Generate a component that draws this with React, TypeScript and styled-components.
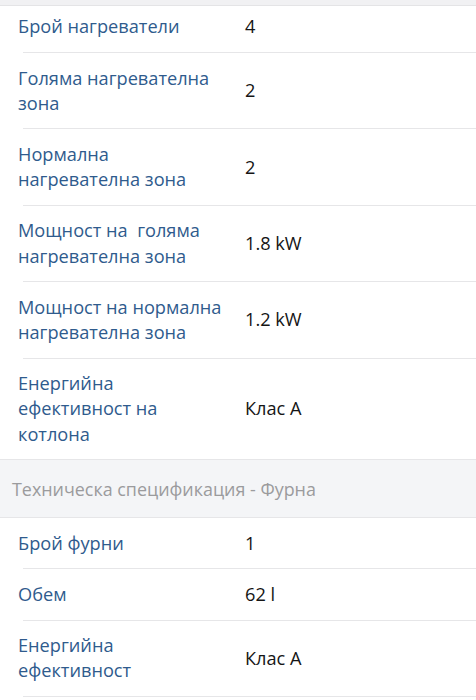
import React from "react";
import styled, { createGlobalStyle } from "styled-components";

const Global = createGlobalStyle`
  html, body { margin: 0; padding: 0; background: #fff; }
  body { font-family: "Open Sans", "Noto Sans", sans-serif; -webkit-font-smoothing: antialiased; }
`;

const Page = styled.div`
  width: 476px;
  background: #fff;
`;

const TopBand = styled.div`
  height: 5px;
  background: #f1f1f3;
  border-bottom: 1px solid #e4e4e6;
`;

const Row = styled.div<{ $first?: boolean }>`
  display: grid;
  grid-template-columns: 227px 1fr;
  align-items: center;
  padding: ${(p) => (p.$first ? "8.3px" : "12.5px")} 0 12.5px 18px;
  line-height: 25.2px;
`;

const Label = styled.div`
  font-size: 18.2px;
  color: #2f5b8d;
  padding-right: 18px;
  white-space: pre-wrap;
`;

const Value = styled.div`
  font-size: 18.2px;
  color: #151515;
`;

const Divider = styled.hr`
  margin: 0 0 0 23px;
  border: 0;
  border-top: 1px solid #e6e6e8;
  height: 0;
`;

const SectionHeader = styled.div`
  height: 57px;
  display: flex;
  align-items: center;
  padding-left: 12px;
  background: #f4f5f7;
  border-top: 1px solid #e6e6e8;
  border-bottom: 1px solid #e6e6e8;
  font-size: 17.9px;
  color: #9b9b9d;
`;

type Item = { label: string; value: string };

const hob: Item[] = [
  { label: "Брой нагреватели", value: "4" },
  { label: "Голяма нагревателна зона", value: "2" },
  { label: "Нормална нагревателна зона", value: "2" },
  { label: "Мощност на  голяма нагревателна зона", value: "1.8 kW" },
  { label: "Мощност на нормална нагревателна зона", value: "1.2 kW" },
  { label: "Енергийна ефективност на котлона", value: "Клас А" },
];

const oven: Item[] = [
  { label: "Брой фурни", value: "1" },
  { label: "Обем", value: "62 l" },
  { label: "Енергийна ефективност", value: "Клас А" },
];

export default function App() {
  return (
    <Page>
      <Global />
      <TopBand />
      {hob.map((it, i) => (
        <React.Fragment key={it.label}>
          <Row $first={i === 0}>
            <Label>{it.label}</Label>
            <Value>{it.value}</Value>
          </Row>
          {i < hob.length - 1 && <Divider />}
        </React.Fragment>
      ))}
      <SectionHeader>Техническа спецификация - Фурна</SectionHeader>
      {oven.map((it) => (
        <React.Fragment key={it.label}>
          <Row>
            <Label>{it.label}</Label>
            <Value>{it.value}</Value>
          </Row>
          <Divider />
        </React.Fragment>
      ))}
    </Page>
  );
}
